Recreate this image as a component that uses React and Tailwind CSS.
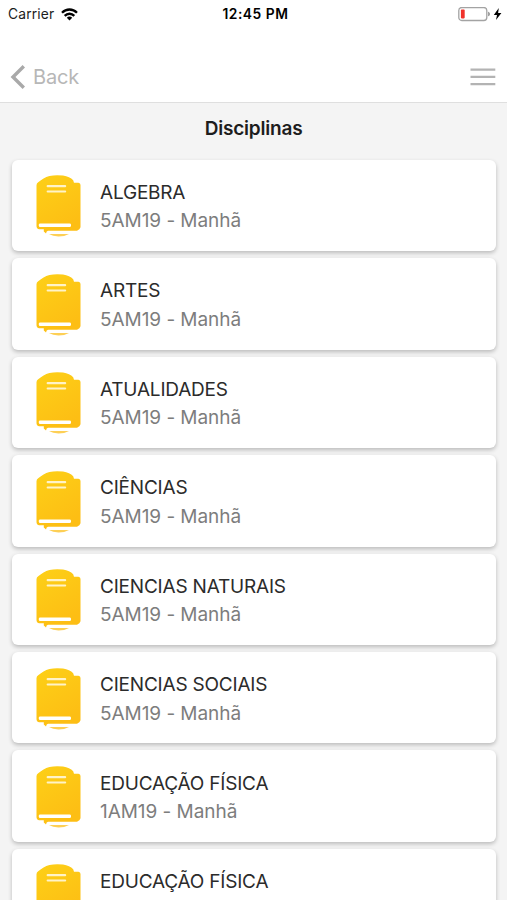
const subjects = [
  { id: 1, name: "ALGEBRA", group: "5AM19 - Manhã" },
  { id: 2, name: "ARTES", group: "5AM19 - Manhã" },
  { id: 3, name: "ATUALIDADES", group: "5AM19 - Manhã" },
  { id: 4, name: "CIÊNCIAS", group: "5AM19 - Manhã" },
  { id: 5, name: "CIENCIAS NATURAIS", group: "5AM19 - Manhã" },
  { id: 6, name: "CIENCIAS SOCIAIS", group: "5AM19 - Manhã" },
  { id: 7, name: "EDUCAÇÃO FÍSICA", group: "1AM19 - Manhã" },
  { id: 8, name: "EDUCAÇÃO FÍSICA" },
];

function WifiIcon() {
  return (
    <svg width="17" height="13" viewBox="0 0 17 13" fill="none" stroke="#000" strokeWidth="2.3">
      <path d="M1 4.7C5.2 0.4 11.8 0.4 16 4.7" />
      <path d="M3.7 7.9C6.4 5 10.6 5 13.3 7.9" />
      <path d="M5.8 9.7C7.4 8.2 9.6 8.2 11.2 9.7L8.5 12.5Z" fill="#000" stroke="none" />
    </svg>
  );
}

function BatteryIcon() {
  return (
    <svg width="45" height="15" viewBox="0 0 45 15">
      <rect x="0.8" y="0.5" width="28" height="13" rx="3" fill="#fff" stroke="#a3a3a3" strokeWidth="1.3" />
      <rect x="2.9" y="2.6" width="3.8" height="8.8" rx="0.8" fill="#f0312b" />
      <path d="M30.2 4.7C32.4 5.3 32.4 8.7 30.2 9.3Z" fill="#8a8a8a" />
      <path d="M40.8 0.9L35.8 7.9H39L38 13.1L43.4 5.9H40.1Z" fill="#000" />
    </svg>
  );
}

function MenuIcon() {
  return (
    <svg width="26" height="18" viewBox="0 0 26 18" stroke="#b3b3b3" strokeWidth="2.3">
      <path d="M0.5 1.6H25.3M0.5 8.9H25.3M0.5 16.2H25.3" />
    </svg>
  );
}

function BookIcon() {
  return (
    <svg width="45" height="62" viewBox="0 0 45 62" className="mt-[15.6px] shrink-0">
      <defs>
        <linearGradient id="book" x1="0" y1="0" x2="0.5" y2="1">
          <stop offset="0" stopColor="#fdd017" />
          <stop offset="1" stopColor="#fdbe14" />
        </linearGradient>
      </defs>
      <path
        d="M0.5 10.3Q0.5 8.3 2.2 7.2C6 4.2 9 2 13.5 0.9Q20 -0.2 27 0.6C31.5 1.4 35 3 37.2 5.2L38 7.8H42.5Q44.5 8 44.5 10V52.2Q44 54.4 41 55.8H12Q10.4 56 10 58.4L7.8 56.6V54.2H3.2Q0.5 53.7 0.5 50.9Z"
        fill="url(#book)"
      />
      <rect x="10.6" y="10" width="19.6" height="2.2" rx="1" fill="#fff3c8" />
      <rect x="10.6" y="15.4" width="19.6" height="2.2" rx="1" fill="#fff3c8" />
      <rect x="2.8" y="48.4" width="32.2" height="3.7" rx="1.4" fill="#fff" />
      <path d="M13 59.1H33Q28.5 61.6 22.6 61.6Q16.6 61.4 13 59.1Z" fill="#fdcf55" />
    </svg>
  );
}

function StatusBar() {
  return (
    <div className="grid h-7 grid-cols-3 items-center pl-2 pr-1 text-[13.8px] text-[#1c1c1c]">
      <div className="flex items-center gap-[7px]">
        <span className="tracking-[0.15px]">Carrier</span>
        <WifiIcon />
      </div>
      <span className="text-center font-semibold tracking-[0.55px] text-black">12:45 PM</span>
      <div className="flex justify-end">
        <BatteryIcon />
      </div>
    </div>
  );
}

function Header() {
  return (
    <header className="flex h-[75px] items-center justify-between border-b border-[#dfdfdf] pl-[10px] pr-[11px] pt-[23px]">
      <button className="flex items-center gap-[8px] text-[20px] leading-6 tracking-[-0.2px] text-[#b7b7b7]">
        <svg width="15" height="24" viewBox="0 0 15 24" fill="none" stroke="#a9a9a9" strokeWidth="3.4">
          <path d="M13.8 1.3L3 12L13.8 22.7" />
        </svg>
        Back
      </button>
      <button aria-label="Menu">
        <MenuIcon />
      </button>
    </header>
  );
}

export default function App() {
  return (
    <div className="h-[900px] overflow-hidden bg-[#f4f4f4] font-['Inter',sans-serif]">
      <div className="bg-white">
        <StatusBar />
        <Header />
      </div>
      <h1 className="flex h-[56.8px] items-center justify-center pb-[5px] text-[19px] font-semibold tracking-[-0.2px] text-[#1d1d1d]">
        Disciplinas
      </h1>
      <ul className="flex flex-col gap-[7px] pl-3 pr-[11px]">
        {subjects.map((subject) => (
          <li
            key={subject.id}
            className="flex h-[91.45px] shrink-0 gap-[19px] rounded-md bg-white pl-6 shadow-[0_2px_4px_rgba(0,0,0,0.24)]"
          >
            <BookIcon />
            <div className="pt-[19.2px]">
              <p className="text-[19px] leading-[28.5px] tracking-[-0.2px] text-[#2b2b2b]">{subject.name}</p>
              {subject.group && (
                <p className="text-[19px] leading-[28.5px] tracking-[-0.05px] text-[#7d7d7d]">{subject.group}</p>
              )}
            </div>
          </li>
        ))}
      </ul>
    </div>
  );
}
